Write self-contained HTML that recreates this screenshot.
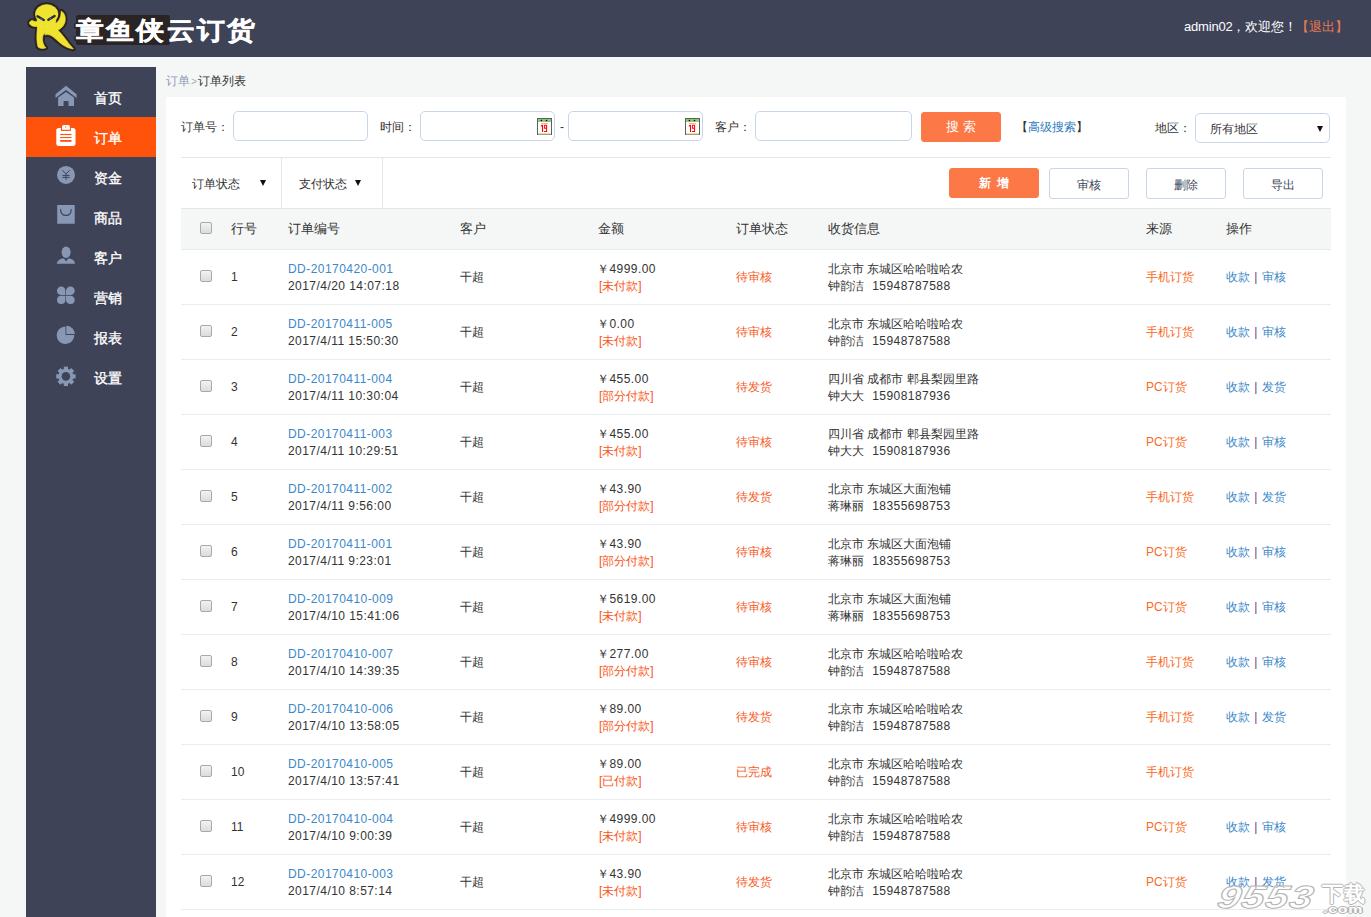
<!DOCTYPE html>
<html><head><meta charset="utf-8">
<style>
*{margin:0;padding:0;box-sizing:border-box}
html,body{width:1371px;height:917px;overflow:hidden;background:#f5f7f6;font-family:"Liberation Sans",sans-serif;font-size:12px;color:#333}
#hdr{position:absolute;left:0;top:0;width:1371px;height:57px;background:#3e4358}
#logo{position:absolute;left:24px;top:0}
#brand{position:absolute;left:76px;top:12px;font-size:28px;line-height:36px;font-weight:bold;color:#fff;white-space:nowrap;letter-spacing:2.2px;-webkit-text-stroke:0.5px #fff;transform:scaleY(0.9);transform-origin:0 31px}
#brandbg{position:absolute;left:76px;top:15px;width:94px;height:30px;background:#2a2424;border-radius:2px}
#brand .o{text-shadow:2px 0 #2a2424,-2px 0 #2a2424,0 2px #2a2424,0 -2px #2a2424,2px 2px #2a2424,-2px -2px #2a2424,2px -2px #2a2424,-2px 2px #2a2424}
#welcome{position:absolute;left:1184px;top:19px;font-size:13px;line-height:16px;color:#fff;white-space:nowrap;letter-spacing:-0.2px}
#quit{position:absolute;left:1296px;top:19px;font-size:13px;line-height:16px;color:#e97a4f;white-space:nowrap}
#welcome .q{color:#e97a4f}
#side{position:absolute;left:26px;top:67px;width:130px;height:850px;background:#3e4358}
.mi{position:absolute;left:0;width:130px;height:40px;color:#fff;font-size:14px}
.mi .t{position:absolute;left:68px;top:12px;line-height:18px;white-space:nowrap;-webkit-text-stroke:0.35px #fff}
.mi.on{background:#ff520a}
.mi svg{position:absolute;left:28px;top:8px}
#panel{position:absolute;left:166px;top:97px;width:1180px;height:820px;background:#fff}
#crumb{position:absolute;left:166px;top:74px;font-size:12px;color:#333;line-height:14px;white-space:nowrap}
#crumb span{color:#8c9bb5}
#crumb .gt{font-size:10px;margin:0 1px 0 1px;color:#a0acc0}
.lbl{position:absolute;font-size:12px;color:#333;line-height:14px;white-space:nowrap}
.inp{position:absolute;border:1px solid #c9d6e8;border-radius:5px;background:#fff}
.btn{position:absolute;border:1px solid #c9d6e8;border-radius:3px;background:#fff;text-align:center;font-size:12px;color:#3b4658;white-space:nowrap}
.btn.o{background:#fc7846;border-color:#fc7846;color:#fff}
.line{position:absolute;background:#e3e7ea}
.cal{position:absolute;top:6px;right:2px}
#table{position:absolute;left:181px;top:209px;width:1150px;height:708px}
#th{position:absolute;left:0;top:0;width:1150px;height:41px;background:#f5f7f6;border-bottom:1px solid #e6eaec}
#th .h{position:absolute;top:12px;font-size:13px;line-height:16px;color:#333;white-space:nowrap}
.cb{position:absolute;width:12px;height:12px;border:1px solid #a9a9a9;border-radius:2px;background:linear-gradient(#f2f2f2,#dcdcdc)}
.row{position:absolute;left:0;width:1150px;height:55px;border-bottom:1px solid #e8eef0}
.row .c1{position:absolute;top:20px;line-height:14px;white-space:nowrap}
.row .l1{position:absolute;top:12px;line-height:14px;white-space:nowrap}
.row .l2{position:absolute;top:29px;line-height:14px;white-space:nowrap}
.lk{color:#3c88c8}
.pay{color:#fa5520}
.st{color:#f85a25}
.src{color:#fa6a25}
.bar{color:#663f88;margin:0 1px}
#wm{position:absolute;left:1200px;top:870px;width:171px;height:47px;white-space:nowrap}
#wm .n{position:absolute;left:22px;top:10px;font-size:32px;line-height:34px;font-weight:bold;font-style:italic;color:rgba(255,255,255,.45);letter-spacing:1px;-webkit-text-stroke:1px #b4b4b4;transform:scaleX(1.28) skewX(-10deg);transform-origin:0 0}
#wm .x{position:absolute;left:122px;top:12px;font-size:21px;line-height:24px;font-weight:bold;color:#fff;letter-spacing:1px;text-shadow:1px 0 #b4b4b4,-1px 0 #b4b4b4,0 1px #b4b4b4,0 -1px #b4b4b4}
#wm .com{position:absolute;left:123px;top:34px;font-size:11px;line-height:11px;font-weight:bold;color:#fff;letter-spacing:0.5px;transform:scaleX(1.45);transform-origin:0 0;text-shadow:1px 0 #b4b4b4,-1px 0 #b4b4b4,0 1px #b4b4b4,0 -1px #b4b4b4}
.n{letter-spacing:.45px}
.arr{position:absolute;width:0;height:0;border-left:3.5px solid transparent;border-right:3.5px solid transparent;border-top:6px solid #111}

</style></head><body>
<div id="hdr"></div>
<svg id="logo" width="56" height="56" viewBox="0 0 56 56">
 <g fill="#2a2323" stroke="#2a2323" stroke-width="4.5" stroke-linejoin="round">
  <ellipse cx="22.7" cy="14" rx="11.3" ry="9.5"/>
  <path d="M13 19 L32 19 L31 29 L14 30 Z"/>
  <path d="M14 21.5 C11 22 9.8 21 8.6 20.4 C6.6 20.4 5 22 5.5 23.8 C7 26.5 11 26.8 14 26.5 Z"/>
  <path d="M28 25 C32 24 37 21 37.2 11 C40.8 13 42.3 18 40.7 23 C39.2 27 36 29.8 31.5 31 Z"/>
  <path d="M13.5 27 C12.5 35 12.5 42 14 47 C16 48.8 20 48.8 22 47.8 C19 45 17.8 40 19 35.5 C20 33.5 22 32.5 24 31 Z"/>
  <path d="M22 28 L30 27 C38 32.5 43 42 49.5 49 C42 48.5 36 43 30 37.5 C27 35 24 34 21 35 Z"/>
 </g>
 <g fill="#f0e330" stroke="#f0e330" stroke-width="0.6">
  <ellipse cx="22.7" cy="14" rx="11.3" ry="9.5"/>
  <path d="M13 19 L32 19 L31 29 L14 30 Z"/>
  <path d="M14 21.5 C11 22 9.8 21 8.6 20.4 C6.6 20.4 5 22 5.5 23.8 C7 26.5 11 26.8 14 26.5 Z"/>
  <path d="M28 25 C32 24 37 21 37.2 11 C40.8 13 42.3 18 40.7 23 C39.2 27 36 29.8 31.5 31 Z"/>
  <path d="M13.5 27 C12.5 35 12.5 42 14 47 C16 48.8 20 48.8 22 47.8 C19 45 17.8 40 19 35.5 C20 33.5 22 32.5 24 31 Z"/>
  <path d="M22 28 L30 27 C38 32.5 43 42 49.5 49 C42 48.5 36 43 30 37.5 C27 35 24 34 21 35 Z"/>
 </g>
 <path d="M13.5 16.3 L19.8 20" stroke="#2a2a40" stroke-width="2.4" stroke-linecap="round"/>
 <path d="M30.6 15.9 L24.4 19.8" stroke="#2a2a40" stroke-width="2.4" stroke-linecap="round"/>
 <circle cx="17.3" cy="19" r="0.9" fill="#5060a0"/><circle cx="26.6" cy="18.9" r="0.9" fill="#5060a0"/>
</svg>
<div id="brandbg"></div><div id="brand"><span class="o">章鱼侠</span>云订货</div>
<div id="welcome">admin02，欢迎您！</div><div id="quit">【退出】</div>

<div id="side">
 <div class="mi" style="top:10px"><span class="t">首页</span></div>
 <div class="mi on" style="top:50px"><span class="t">订单</span></div>
 <div class="mi" style="top:90px"><span class="t">资金</span></div>
 <div class="mi" style="top:130px"><span class="t">商品</span></div>
 <div class="mi" style="top:170px"><span class="t">客户</span></div>
 <div class="mi" style="top:210px"><span class="t">营销</span></div>
 <div class="mi" style="top:250px"><span class="t">报表</span></div>
 <div class="mi" style="top:290px"><span class="t">设置</span></div>
</div>
<!-- sidebar icons, absolute page coords, each 28x28 box -->
<svg style="position:absolute;left:52px;top:82px" width="28" height="28" viewBox="0 0 28 28" fill="#8898b4">
 <polygon points="3.5,12.2 14,3.8 24.6,12.2 24.6,15.9 14,8.1 3.5,15.9"/>
 <polygon points="6.1,15.6 14,9.9 22,15.6 22,24 16.5,24 16.5,18.9 11.6,18.9 11.6,24 6.1,24"/>
</svg>
<svg style="position:absolute;left:52px;top:122px" width="28" height="28" viewBox="0 0 28 28">
 <rect x="4.3" y="6" width="19.2" height="18" rx="2.5" fill="#fff"/>
 <rect x="8.9" y="5" width="10" height="3.9" fill="#ff520a"/>
 <path d="M10 7.8 V4.6 Q10 3 11.6 3 H16.3 Q17.9 3 17.9 4.6 V7.8 Z" fill="#fff"/>
 <circle cx="13.6" cy="5.1" r="0.8" fill="#ff9a40"/>
 <rect x="8.2" y="11.9" width="11.3" height="1.1" fill="#ff520a"/>
 <rect x="8.2" y="15" width="11.3" height="1.1" fill="#ff520a"/>
 <rect x="8.2" y="18" width="11.3" height="1.8" fill="#ff520a"/>
</svg>
<svg style="position:absolute;left:52px;top:162px" width="28" height="28" viewBox="0 0 28 28">
 <circle cx="14" cy="12.9" r="9" fill="#8898b4"/>
 <path d="M10.4 8.2 L14 11.9 L17.7 8.2 M10.4 13.4 H17.7 M10.4 15.4 H17.7 M14 11.9 V17.8" stroke="#3e4358" stroke-width="1" fill="none"/>
</svg>
<svg style="position:absolute;left:52px;top:202px" width="28" height="28" viewBox="0 0 28 28">
 <rect x="5.2" y="2.9" width="17.5" height="18.9" rx="0.6" fill="#8898b4"/>
 <path d="M8.6 7.2 C8.6 11.5 10.5 13.4 14 13.4 C17.5 13.4 19.2 11.5 19.2 7.2" stroke="#3e4358" stroke-width="1.2" fill="none"/>
</svg>
<svg style="position:absolute;left:52px;top:242px" width="28" height="28" viewBox="0 0 28 28" fill="#8898b4">
 <ellipse cx="14.1" cy="10.2" rx="4.5" ry="5.7"/>
 <path d="M4.7 21.8 C5.5 18.2 8.5 16.6 12 16.5 L14.1 19.5 L16.2 16.5 C19.7 16.6 22.5 18.2 23.2 21.8 Z"/>
</svg>
<svg style="position:absolute;left:52px;top:282px" width="28" height="28" viewBox="0 0 28 28" fill="#8898b4">
 <path d="M13.4 13 H9 A4.2 4.2 0 0 1 5 8.8 A4.2 4.2 0 0 1 9.2 4.6 A4.2 4.2 0 0 1 13.4 8.8 Z"/>
 <path d="M14 13 H18.5 A4.2 4.2 0 0 0 22.7 8.8 A4.2 4.2 0 0 0 18.5 4.6 A4.2 4.2 0 0 0 14 8.8 Z"/>
 <path d="M13.4 13.7 H9 A4.2 4.2 0 0 0 5 17.9 A4.2 4.2 0 0 0 9.2 22 A4.2 4.2 0 0 0 13.4 17.9 Z"/>
 <path d="M14 13.7 H18.5 A4.2 4.2 0 0 1 22.7 17.9 A4.2 4.2 0 0 1 18.5 22 A4.2 4.2 0 0 1 14 17.9 Z"/>
</svg>
<svg style="position:absolute;left:52px;top:322px" width="28" height="28" viewBox="0 0 28 28" fill="#8898b4">
 <path d="M13.5 13 V4.5 A8.8 8.8 0 1 0 22.3 13 Z"/>
 <path d="M14.3 12.1 V3.8 A8.6 8.6 0 0 1 22.9 12.1 Z"/>
</svg>
<svg style="position:absolute;left:52px;top:362px" width="28" height="28" viewBox="0 0 28 28">
 <g fill="#8898b4" transform="translate(13.9 14.35)">
  <circle r="7.6"/>
  <rect x="-2.1" y="-9.7" width="4.2" height="4" />
  <rect x="-2.1" y="-9.7" width="4.2" height="4" transform="rotate(45)"/>
  <rect x="-2.1" y="-9.7" width="4.2" height="4" transform="rotate(90)"/>
  <rect x="-2.1" y="-9.7" width="4.2" height="4" transform="rotate(135)"/>
  <rect x="-2.1" y="-9.7" width="4.2" height="4" transform="rotate(180)"/>
  <rect x="-2.1" y="-9.7" width="4.2" height="4" transform="rotate(225)"/>
  <rect x="-2.1" y="-9.7" width="4.2" height="4" transform="rotate(270)"/>
  <rect x="-2.1" y="-9.7" width="4.2" height="4" transform="rotate(315)"/>
  <circle r="4.3" fill="#3e4358"/>
 </g>
</svg>

<div id="crumb"><span>订单</span><span class="gt">&gt;</span>订单列表</div>
<div id="panel"></div>

<!-- search row -->
<div class="lbl" style="left:181px;top:120px">订单号：</div>
<div class="inp" style="left:233px;top:111px;width:135px;height:30px"></div>
<div class="lbl" style="left:380px;top:120px">时间：</div>
<div class="inp" style="left:420px;top:111px;width:135px;height:30px"><svg class="cal" width="15" height="17" viewBox="0 0 15 17"><rect x="0.5" y="0.5" width="14" height="16" fill="#fff" stroke="#5a615a"/><rect x="1" y="1" width="13" height="3" fill="#8cc97a"/><rect x="1" y="15" width="13" height="1.5" fill="#e9dca8"/><circle cx="4.4" cy="2.5" r="0.8" fill="#000"/><circle cx="9.5" cy="2.5" r="0.8" fill="#000"/><rect x="4" y="5" width="7" height="0.8" fill="#f0a070"/><path d="M3.8 7.6 L5 6.8 H6.1 V14 H5 V8.2 L3.8 8.7 Z" fill="#f00"/><path d="M7.1 6.8 H10.1 V14 H7.1 V13 H9.1 V10.7 H7.1 Z M8.1 7.8 V9.7 H9.1 V7.8 Z" fill="#f00" fill-rule="evenodd"/></svg></div>
<div class="lbl" style="left:560px;top:120px">-</div>
<div class="inp" style="left:568px;top:111px;width:135px;height:30px"><svg class="cal" width="15" height="17" viewBox="0 0 15 17"><rect x="0.5" y="0.5" width="14" height="16" fill="#fff" stroke="#5a615a"/><rect x="1" y="1" width="13" height="3" fill="#8cc97a"/><rect x="1" y="15" width="13" height="1.5" fill="#e9dca8"/><circle cx="4.4" cy="2.5" r="0.8" fill="#000"/><circle cx="9.5" cy="2.5" r="0.8" fill="#000"/><rect x="4" y="5" width="7" height="0.8" fill="#f0a070"/><path d="M3.8 7.6 L5 6.8 H6.1 V14 H5 V8.2 L3.8 8.7 Z" fill="#f00"/><path d="M7.1 6.8 H10.1 V14 H7.1 V13 H9.1 V10.7 H7.1 Z M8.1 7.8 V9.7 H9.1 V7.8 Z" fill="#f00" fill-rule="evenodd"/></svg></div>
<div class="lbl" style="left:715px;top:120px">客户：</div>
<div class="inp" style="left:755px;top:111px;width:157px;height:30px"></div>
<div class="btn o" style="left:921px;top:112px;width:80px;height:30px;line-height:28px;font-size:13px">搜 索</div>
<div class="lbl" style="left:1016px;top:120px">【<span style="color:#2f7dc0">高级搜索</span>】</div>
<div class="lbl" style="left:1155px;top:121px">地区：</div>
<div class="inp" style="left:1195px;top:113px;width:135px;height:30px"><span style="position:absolute;left:14px;top:8px;line-height:14px;font-size:12px;color:#333">所有地区</span><span class="arr" style="left:121px;top:12px"></span></div>

<!-- filter row -->
<div class="line" style="left:181px;top:157px;width:1150px;height:1px"></div>
<div class="line" style="left:181px;top:208px;width:1150px;height:1px"></div>
<div class="line" style="left:281px;top:157px;width:1px;height:52px"></div>
<div class="line" style="left:382px;top:157px;width:1px;height:52px"></div>
<div class="lbl" style="left:192px;top:177px">订单状态</div>
<div class="arr" style="left:260px;top:180px"></div>
<div class="lbl" style="left:299px;top:177px">支付状态</div>
<div class="arr" style="left:355px;top:180px"></div>
<div class="btn o" style="left:949px;top:168px;width:90px;height:30px;line-height:28px;font-size:12px;font-weight:bold">新&nbsp;&nbsp;增</div>
<div class="btn" style="left:1049px;top:168px;width:80px;height:31px;line-height:32px">审核</div>
<div class="btn" style="left:1146px;top:168px;width:80px;height:31px;line-height:32px">删除</div>
<div class="btn" style="left:1243px;top:168px;width:80px;height:31px;line-height:32px">导出</div>

<div id="table">
<div id="th">
<div class="cb" style="left:19px;top:13px"></div>
<div class="h" style="left:50px">行号</div>
<div class="h" style="left:107px">订单编号</div>
<div class="h" style="left:279px">客户</div>
<div class="h" style="left:417px">金额</div>
<div class="h" style="left:555px">订单状态</div>
<div class="h" style="left:647px">收货信息</div>
<div class="h" style="left:965px">来源</div>
<div class="h" style="left:1045px">操作</div>
</div>
<div class="row" style="top:41px">
<div class="cb" style="left:19px;top:20px"></div>
<div class="c1" style="left:50px">1</div>
<div class="l1 lk n" style="left:107px">DD-20170420-001</div><div class="l2 n" style="left:107px">2017/4/20 14:07:18</div>
<div class="c1" style="left:279px">干超</div>
<div class="l1 n" style="left:416px">￥4999.00</div><div class="l2 pay" style="left:418px">[未付款]</div>
<div class="c1 st" style="left:555px">待审核</div>
<div class="l1" style="left:647px">北京市 东城区哈哈啦哈农</div><div class="l2" style="left:647px">钟韵洁&nbsp;&nbsp;<span class="n" style="margin-left:1.5px">15948787588</span></div>
<div class="c1 src" style="left:965px">手机订货</div>
<div class="c1" style="left:1045px"><span class="lk">收款</span><span class="bar"> | </span><span class="lk">审核</span></div>
</div><div class="row" style="top:96px">
<div class="cb" style="left:19px;top:20px"></div>
<div class="c1" style="left:50px">2</div>
<div class="l1 lk n" style="left:107px">DD-20170411-005</div><div class="l2 n" style="left:107px">2017/4/11 15:50:30</div>
<div class="c1" style="left:279px">干超</div>
<div class="l1 n" style="left:416px">￥0.00</div><div class="l2 pay" style="left:418px">[未付款]</div>
<div class="c1 st" style="left:555px">待审核</div>
<div class="l1" style="left:647px">北京市 东城区哈哈啦哈农</div><div class="l2" style="left:647px">钟韵洁&nbsp;&nbsp;<span class="n" style="margin-left:1.5px">15948787588</span></div>
<div class="c1 src" style="left:965px">手机订货</div>
<div class="c1" style="left:1045px"><span class="lk">收款</span><span class="bar"> | </span><span class="lk">审核</span></div>
</div><div class="row" style="top:151px">
<div class="cb" style="left:19px;top:20px"></div>
<div class="c1" style="left:50px">3</div>
<div class="l1 lk n" style="left:107px">DD-20170411-004</div><div class="l2 n" style="left:107px">2017/4/11 10:30:04</div>
<div class="c1" style="left:279px">干超</div>
<div class="l1 n" style="left:416px">￥455.00</div><div class="l2 pay" style="left:418px">[部分付款]</div>
<div class="c1 st" style="left:555px">待发货</div>
<div class="l1" style="left:647px">四川省 成都市 郫县梨园里路</div><div class="l2" style="left:647px">钟大大&nbsp;&nbsp;<span class="n" style="margin-left:1.5px">15908187936</span></div>
<div class="c1 src" style="left:965px">PC订货</div>
<div class="c1" style="left:1045px"><span class="lk">收款</span><span class="bar"> | </span><span class="lk">发货</span></div>
</div><div class="row" style="top:206px">
<div class="cb" style="left:19px;top:20px"></div>
<div class="c1" style="left:50px">4</div>
<div class="l1 lk n" style="left:107px">DD-20170411-003</div><div class="l2 n" style="left:107px">2017/4/11 10:29:51</div>
<div class="c1" style="left:279px">干超</div>
<div class="l1 n" style="left:416px">￥455.00</div><div class="l2 pay" style="left:418px">[未付款]</div>
<div class="c1 st" style="left:555px">待审核</div>
<div class="l1" style="left:647px">四川省 成都市 郫县梨园里路</div><div class="l2" style="left:647px">钟大大&nbsp;&nbsp;<span class="n" style="margin-left:1.5px">15908187936</span></div>
<div class="c1 src" style="left:965px">PC订货</div>
<div class="c1" style="left:1045px"><span class="lk">收款</span><span class="bar"> | </span><span class="lk">审核</span></div>
</div><div class="row" style="top:261px">
<div class="cb" style="left:19px;top:20px"></div>
<div class="c1" style="left:50px">5</div>
<div class="l1 lk n" style="left:107px">DD-20170411-002</div><div class="l2 n" style="left:107px">2017/4/11 9:56:00</div>
<div class="c1" style="left:279px">干超</div>
<div class="l1 n" style="left:416px">￥43.90</div><div class="l2 pay" style="left:418px">[部分付款]</div>
<div class="c1 st" style="left:555px">待发货</div>
<div class="l1" style="left:647px">北京市 东城区大面泡铺</div><div class="l2" style="left:647px">蒋琳丽&nbsp;&nbsp;<span class="n" style="margin-left:1.5px">18355698753</span></div>
<div class="c1 src" style="left:965px">手机订货</div>
<div class="c1" style="left:1045px"><span class="lk">收款</span><span class="bar"> | </span><span class="lk">发货</span></div>
</div><div class="row" style="top:316px">
<div class="cb" style="left:19px;top:20px"></div>
<div class="c1" style="left:50px">6</div>
<div class="l1 lk n" style="left:107px">DD-20170411-001</div><div class="l2 n" style="left:107px">2017/4/11 9:23:01</div>
<div class="c1" style="left:279px">干超</div>
<div class="l1 n" style="left:416px">￥43.90</div><div class="l2 pay" style="left:418px">[部分付款]</div>
<div class="c1 st" style="left:555px">待审核</div>
<div class="l1" style="left:647px">北京市 东城区大面泡铺</div><div class="l2" style="left:647px">蒋琳丽&nbsp;&nbsp;<span class="n" style="margin-left:1.5px">18355698753</span></div>
<div class="c1 src" style="left:965px">PC订货</div>
<div class="c1" style="left:1045px"><span class="lk">收款</span><span class="bar"> | </span><span class="lk">审核</span></div>
</div><div class="row" style="top:371px">
<div class="cb" style="left:19px;top:20px"></div>
<div class="c1" style="left:50px">7</div>
<div class="l1 lk n" style="left:107px">DD-20170410-009</div><div class="l2 n" style="left:107px">2017/4/10 15:41:06</div>
<div class="c1" style="left:279px">干超</div>
<div class="l1 n" style="left:416px">￥5619.00</div><div class="l2 pay" style="left:418px">[未付款]</div>
<div class="c1 st" style="left:555px">待审核</div>
<div class="l1" style="left:647px">北京市 东城区大面泡铺</div><div class="l2" style="left:647px">蒋琳丽&nbsp;&nbsp;<span class="n" style="margin-left:1.5px">18355698753</span></div>
<div class="c1 src" style="left:965px">PC订货</div>
<div class="c1" style="left:1045px"><span class="lk">收款</span><span class="bar"> | </span><span class="lk">审核</span></div>
</div><div class="row" style="top:426px">
<div class="cb" style="left:19px;top:20px"></div>
<div class="c1" style="left:50px">8</div>
<div class="l1 lk n" style="left:107px">DD-20170410-007</div><div class="l2 n" style="left:107px">2017/4/10 14:39:35</div>
<div class="c1" style="left:279px">干超</div>
<div class="l1 n" style="left:416px">￥277.00</div><div class="l2 pay" style="left:418px">[部分付款]</div>
<div class="c1 st" style="left:555px">待审核</div>
<div class="l1" style="left:647px">北京市 东城区哈哈啦哈农</div><div class="l2" style="left:647px">钟韵洁&nbsp;&nbsp;<span class="n" style="margin-left:1.5px">15948787588</span></div>
<div class="c1 src" style="left:965px">手机订货</div>
<div class="c1" style="left:1045px"><span class="lk">收款</span><span class="bar"> | </span><span class="lk">审核</span></div>
</div><div class="row" style="top:481px">
<div class="cb" style="left:19px;top:20px"></div>
<div class="c1" style="left:50px">9</div>
<div class="l1 lk n" style="left:107px">DD-20170410-006</div><div class="l2 n" style="left:107px">2017/4/10 13:58:05</div>
<div class="c1" style="left:279px">干超</div>
<div class="l1 n" style="left:416px">￥89.00</div><div class="l2 pay" style="left:418px">[部分付款]</div>
<div class="c1 st" style="left:555px">待发货</div>
<div class="l1" style="left:647px">北京市 东城区哈哈啦哈农</div><div class="l2" style="left:647px">钟韵洁&nbsp;&nbsp;<span class="n" style="margin-left:1.5px">15948787588</span></div>
<div class="c1 src" style="left:965px">手机订货</div>
<div class="c1" style="left:1045px"><span class="lk">收款</span><span class="bar"> | </span><span class="lk">发货</span></div>
</div><div class="row" style="top:536px">
<div class="cb" style="left:19px;top:20px"></div>
<div class="c1" style="left:50px">10</div>
<div class="l1 lk n" style="left:107px">DD-20170410-005</div><div class="l2 n" style="left:107px">2017/4/10 13:57:41</div>
<div class="c1" style="left:279px">干超</div>
<div class="l1 n" style="left:416px">￥89.00</div><div class="l2 pay" style="left:418px">[已付款]</div>
<div class="c1 st" style="left:555px">已完成</div>
<div class="l1" style="left:647px">北京市 东城区哈哈啦哈农</div><div class="l2" style="left:647px">钟韵洁&nbsp;&nbsp;<span class="n" style="margin-left:1.5px">15948787588</span></div>
<div class="c1 src" style="left:965px">手机订货</div>
<div class="c1" style="left:1045px"></div>
</div><div class="row" style="top:591px">
<div class="cb" style="left:19px;top:20px"></div>
<div class="c1" style="left:50px">11</div>
<div class="l1 lk n" style="left:107px">DD-20170410-004</div><div class="l2 n" style="left:107px">2017/4/10 9:00:39</div>
<div class="c1" style="left:279px">干超</div>
<div class="l1 n" style="left:416px">￥4999.00</div><div class="l2 pay" style="left:418px">[未付款]</div>
<div class="c1 st" style="left:555px">待审核</div>
<div class="l1" style="left:647px">北京市 东城区哈哈啦哈农</div><div class="l2" style="left:647px">钟韵洁&nbsp;&nbsp;<span class="n" style="margin-left:1.5px">15948787588</span></div>
<div class="c1 src" style="left:965px">PC订货</div>
<div class="c1" style="left:1045px"><span class="lk">收款</span><span class="bar"> | </span><span class="lk">审核</span></div>
</div><div class="row" style="top:646px">
<div class="cb" style="left:19px;top:20px"></div>
<div class="c1" style="left:50px">12</div>
<div class="l1 lk n" style="left:107px">DD-20170410-003</div><div class="l2 n" style="left:107px">2017/4/10 8:57:14</div>
<div class="c1" style="left:279px">干超</div>
<div class="l1 n" style="left:416px">￥43.90</div><div class="l2 pay" style="left:418px">[未付款]</div>
<div class="c1 st" style="left:555px">待发货</div>
<div class="l1" style="left:647px">北京市 东城区哈哈啦哈农</div><div class="l2" style="left:647px">钟韵洁&nbsp;&nbsp;<span class="n" style="margin-left:1.5px">15948787588</span></div>
<div class="c1 src" style="left:965px">PC订货</div>
<div class="c1" style="left:1045px"><span class="lk">收款</span><span class="bar"> | </span><span class="lk">发货</span></div>
</div>
</div>
<div id="wm"><span class="n">9553</span><span class="x">下载</span><span class="com">.com</span></div>
</body></html>
